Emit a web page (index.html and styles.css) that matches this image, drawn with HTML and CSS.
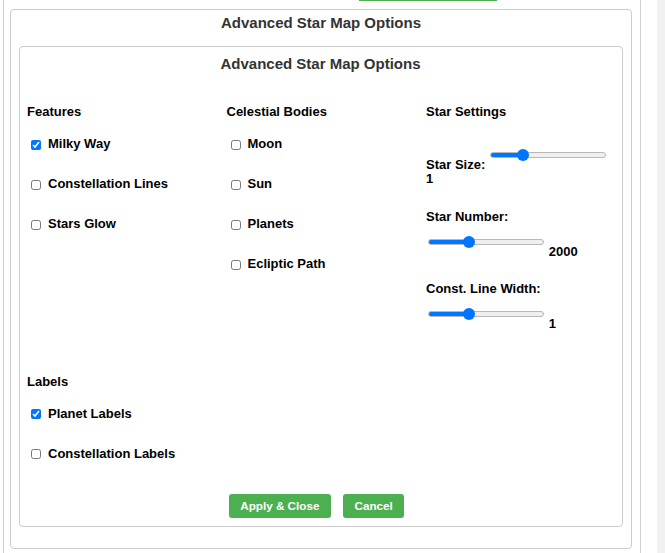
FILE: index.html
```html
<!DOCTYPE html>
<html lang="en">
<head>
<meta charset="utf-8">
<title>Advanced Star Map Options</title>
<link rel="stylesheet" href="styles.css">
</head>
<body>
<div class="page">
  <div class="frame">
    <div class="top-btn"></div>
    <div class="dialog">
      <h3 class="title dialog-title">Advanced Star Map Options</h3>
      <div class="panel">
        <h3 class="title panel-title">Advanced Star Map Options</h3>
        <div class="columns">
          <div class="col">
            <h4 class="col-head">Features</h4>
            <label class="opt"><input type="checkbox" checked>Milky Way</label>
            <label class="opt"><input type="checkbox">Constellation Lines</label>
            <label class="opt"><input type="checkbox">Stars Glow</label>
          </div>
          <div class="col">
            <h4 class="col-head">Celestial Bodies</h4>
            <label class="opt"><input type="checkbox">Moon</label>
            <label class="opt"><input type="checkbox">Sun</label>
            <label class="opt"><input type="checkbox">Planets</label>
            <label class="opt"><input type="checkbox">Ecliptic Path</label>
          </div>
          <div class="col settings">
            <h4 class="col-head">Star Settings</h4>
            <div class="setting"><span class="setting-label">Star Size:</span> <input type="range" class="slider" min="0" max="4" step="1" value="1" style="--fill: 27.5%"> <span class="val">1</span></div>
            <div class="setting"><span class="setting-label">Star Number:</span> <input type="range" class="slider" min="500" max="5000" step="100" value="2000" style="--fill: 35.2%"> <span class="val">2000</span></div>
            <div class="setting"><span class="setting-label">Const. Line Width:</span> <input type="range" class="slider" min="0" max="3" step="1" value="1" style="--fill: 35.2%"> <span class="val">1</span></div>
          </div>
        </div>
        <div class="col labels">
          <h4 class="col-head">Labels</h4>
          <label class="opt"><input type="checkbox" checked>Planet Labels</label>
          <label class="opt"><input type="checkbox">Constellation Labels</label>
        </div>
        <div class="actions">
          <button class="btn" type="button">Apply &amp; Close</button>
          <button class="btn" type="button">Cancel</button>
        </div>
      </div>
    </div>
  </div>
  <div class="gutter"></div>
  <div class="scrollbar"></div>
</div>
</body>
</html>
```

FILE: styles.css
```css
* { box-sizing: border-box; }

html, body {
  margin: 0;
  padding: 0;
  background: #ffffff;
}

body {
  font-family: "Liberation Sans", Arial, sans-serif;
  color: #000;
}

.page {
  display: flex;
  height: 553px;
  overflow: hidden;
}

.frame {
  margin-left: 3px;
  width: 638px;
  flex: none;
  border-left: 1px solid #cfcfcf;
  border-right: 1px solid #cfcfcf;
}

.gutter {
  width: 16px;
  flex: none;
}

.scrollbar {
  width: 8px;
  flex: none;
  background: #f1f1f1;
}

.top-btn {
  height: 1px;
  width: 138px;
  margin-left: 355px;
  background: #4caf50;
}

.dialog {
  margin: 8px 0 0 6px;
  width: 622px;
  border: 1px solid #cccccc;
  border-radius: 4px;
  padding: 0 8px 21px 8px;
}

.title {
  margin: 0;
  font-size: 15px;
  line-height: 18px;
  font-weight: bold;
  color: #333333;
  text-align: center;
}

.dialog-title {
  padding-top: 1px;
  margin: 3px 0 14px;
}

.panel {
  border: 1px solid #cccccc;
  border-radius: 4px;
  padding: 8px 8px 8px 7px;
}

.panel-title {
  margin: 0 0 31px;
}

.columns {
  display: grid;
  grid-template-columns: 187px 187px 187px;
  column-gap: 12.5px;
  align-items: start;
}

.col {
  display: flex;
  flex-direction: column;
  gap: 24px;
}

.col-head {
  margin: 0 0 -8px;
  font-size: 13px;
  line-height: 16px;
  font-weight: bold;
}

.opt {
  display: flex;
  align-items: center;
  height: 16px;
  font-size: 13px;
  line-height: 16px;
  font-weight: bold;
}

.opt input {
  width: 10px;
  height: 10px;
  margin: 1px 7px 0 4px;
}

.settings {
  gap: 22.5px;
}

.settings .col-head {
  margin-bottom: -6px;
}

.setting {
  font-size: 13px;
  line-height: 15px;
  font-weight: bold;
}

.slider {
  -webkit-appearance: none;
  appearance: none;
  width: 116px;
  height: 12px;
  margin: 12.3px 1.6px 1.6px 1.6px;
  padding: 0;
  background: transparent;
  vertical-align: 7.5px;
}

.slider::-webkit-slider-runnable-track {
  height: 6px;
  border-radius: 3px;
  border: 1px solid #b8b8b8;
  background: linear-gradient(to right, #0075ff 0, #0075ff var(--fill), #efefef var(--fill), #efefef 100%);
}

.slider::-webkit-slider-thumb {
  -webkit-appearance: none;
  appearance: none;
  width: 12px;
  height: 12px;
  margin-top: -4px;
  border: none;
  border-radius: 50%;
  background: #0075ff;
}

.labels {
  margin-top: 43px;
}

.actions {
  display: flex;
  justify-content: center;
  gap: 4px;
  margin-top: 32px;
}

.btn {
  height: 24px;
  padding: 0 11.5px;
  margin-right: 8px;
  border: none;
  border-radius: 3px;
  background: #4caf50;
  color: #ffffff;
  font-family: "Liberation Sans", Arial, sans-serif;
  font-size: 11.7px;
  font-weight: bold;
}
```
